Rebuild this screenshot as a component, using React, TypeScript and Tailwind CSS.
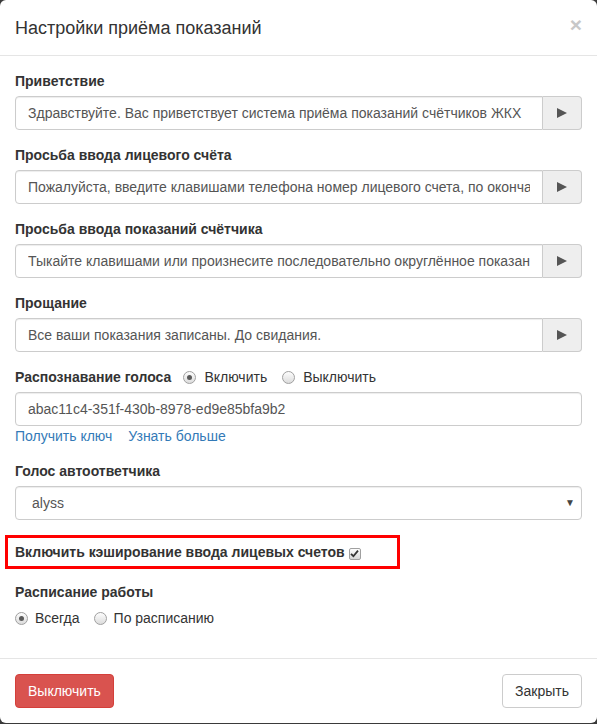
const prompts = [
  {
    label: 'Приветствие',
    text: 'Здравствуйте. Вас приветствует система приёма показаний счётчиков ЖКХ',
  },
  {
    label: 'Просьба ввода лицевого счёта',
    text: 'Пожалуйста, введите клавишами телефона номер лицевого счета, по окончании нажмите решётку',
  },
  {
    label: 'Просьба ввода показаний счётчика',
    text: 'Тыкайте клавишами или произнесите последовательно округлённое показание счётчика',
  },
  {
    label: 'Прощание',
    text: 'Все ваши показания записаны. До свидания.',
  },
];

function Radio({ checked }: { checked?: boolean }) {
  return (
    <span className="flex h-[13px] w-[13px] shrink-0 items-center justify-center rounded-full border border-[#a0a0a0] bg-gradient-to-b from-[#fdfdfd] to-[#dcdcdc]">
      {checked && <span className="h-[5px] w-[5px] rounded-full bg-[#5a5a5a]" />}
    </span>
  );
}

function Checkbox() {
  return (
    <span className="inline-flex h-[12px] w-[12px] items-center justify-center rounded-[2px] border border-[#a0a0a0] bg-gradient-to-b from-[#fdfdfd] to-[#d6d6d6] align-[-1px]">
      <svg width="9" height="9" viewBox="0 0 9 9">
        <path d="M1 4.8 L3.4 7.2 L8 1.6" stroke="#333" strokeWidth="1.8" fill="none" />
      </svg>
    </span>
  );
}

function PromptField({ label, text }: { label: string; text: string }) {
  return (
    <div className="mb-[15px]">
      <label className="mb-[5px] block font-bold">{label}</label>
      <div className="flex h-[34px]">
        <input
          readOnly
          value={text}
          className="min-w-0 flex-1 rounded-l-[4px] border border-[#ccc] px-[12px] text-[14px] text-[#555] shadow-[inset_0_1px_1px_rgba(0,0,0,0.075)] outline-none"
        />
        <button className="flex w-[39px] items-center justify-center rounded-r-[4px] border border-l-0 border-[#ccc] bg-[#eee]">
          <svg width="10" height="10" viewBox="0 0 10 10">
            <polygon points="0,0 10,5 0,10" fill="#555" />
          </svg>
        </button>
      </div>
    </div>
  );
}

export default function App() {
  return (
    <div className="h-[724px] w-[597px] bg-[#3a3a3a] font-['Liberation_Sans',Arial,sans-serif] text-[14px] leading-[20px] text-[#333]">
      <div className="rounded-[6px] bg-white">
        <div className="flex items-start justify-between border-b border-[#e5e5e5] px-[15px] pt-[15px] pb-[14px]">
          <h4 className="text-[18px] leading-[26px]">Настройки приёма показаний</h4>
          <span className="-mt-[1px] text-[21px] leading-[21px] font-bold text-[#c8c8c8]">×</span>
        </div>

        <div className="p-[15px]">
          {prompts.map((p) => (
            <PromptField key={p.label} label={p.label} text={p.text} />
          ))}

          <div className="mb-[15px]">
            <div className="mb-[5px] flex items-center">
              <span className="font-bold">Распознавание голоса</span>
              <span className="ml-[12px]"><Radio checked /></span>
              <span className="ml-[8px]">Включить</span>
              <span className="ml-[15px]"><Radio /></span>
              <span className="ml-[8px]">Выключить</span>
            </div>
            <input
              readOnly
              value="abac11c4-351f-430b-8978-ed9e85bfa9b2"
              className="block h-[34px] w-full rounded-[4px] border border-[#ccc] px-[12px] text-[14px] text-[#555] shadow-[inset_0_1px_1px_rgba(0,0,0,0.075)] outline-none"
            />
            <div className="flex gap-[16px] text-[#337ab7]">
              <a>Получить ключ</a>
              <a>Узнать больше</a>
            </div>
          </div>

          <div className="mb-[15px]">
            <label className="mb-[5px] block font-bold">Голос автоответчика</label>
            <div className="flex h-[34px] items-center justify-between rounded-[4px] border border-[#ccc] pr-[6px] pl-[16px] text-[#555] shadow-[inset_0_1px_1px_rgba(0,0,0,0.075)]">
              <span>alyss</span>
              <span className="text-[10px] text-[#444]">▼</span>
            </div>
          </div>

          <div className="mb-[13px] -ml-[10px] w-[395px] border-[3px] border-[#f00] py-[4px] pl-[7px]">
            <label className="font-bold">
              Включить кэширование ввода лицевых счетов <Checkbox />
            </label>
          </div>

          <div>
            <label className="block font-bold">Расписание работы</label>
            <div className="mt-[6px] flex items-center">
              <Radio checked />
              <span className="ml-[7px]">Всегда</span>
              <span className="ml-[14px]"><Radio /></span>
              <span className="ml-[7px]">По расписанию</span>
            </div>
          </div>
          <div className="h-[15px]" />
        </div>

        <div className="flex justify-between border-t border-[#e5e5e5] p-[15px]">
          <button className="h-[34px] rounded-[4px] border border-[#d43f3a] bg-[#d9534f] px-[12px] text-white">
            Выключить
          </button>
          <button className="h-[34px] rounded-[4px] border border-[#ccc] bg-white px-[12px] text-[#333]">
            Закрыть
          </button>
        </div>
      </div>
    </div>
  );
}
